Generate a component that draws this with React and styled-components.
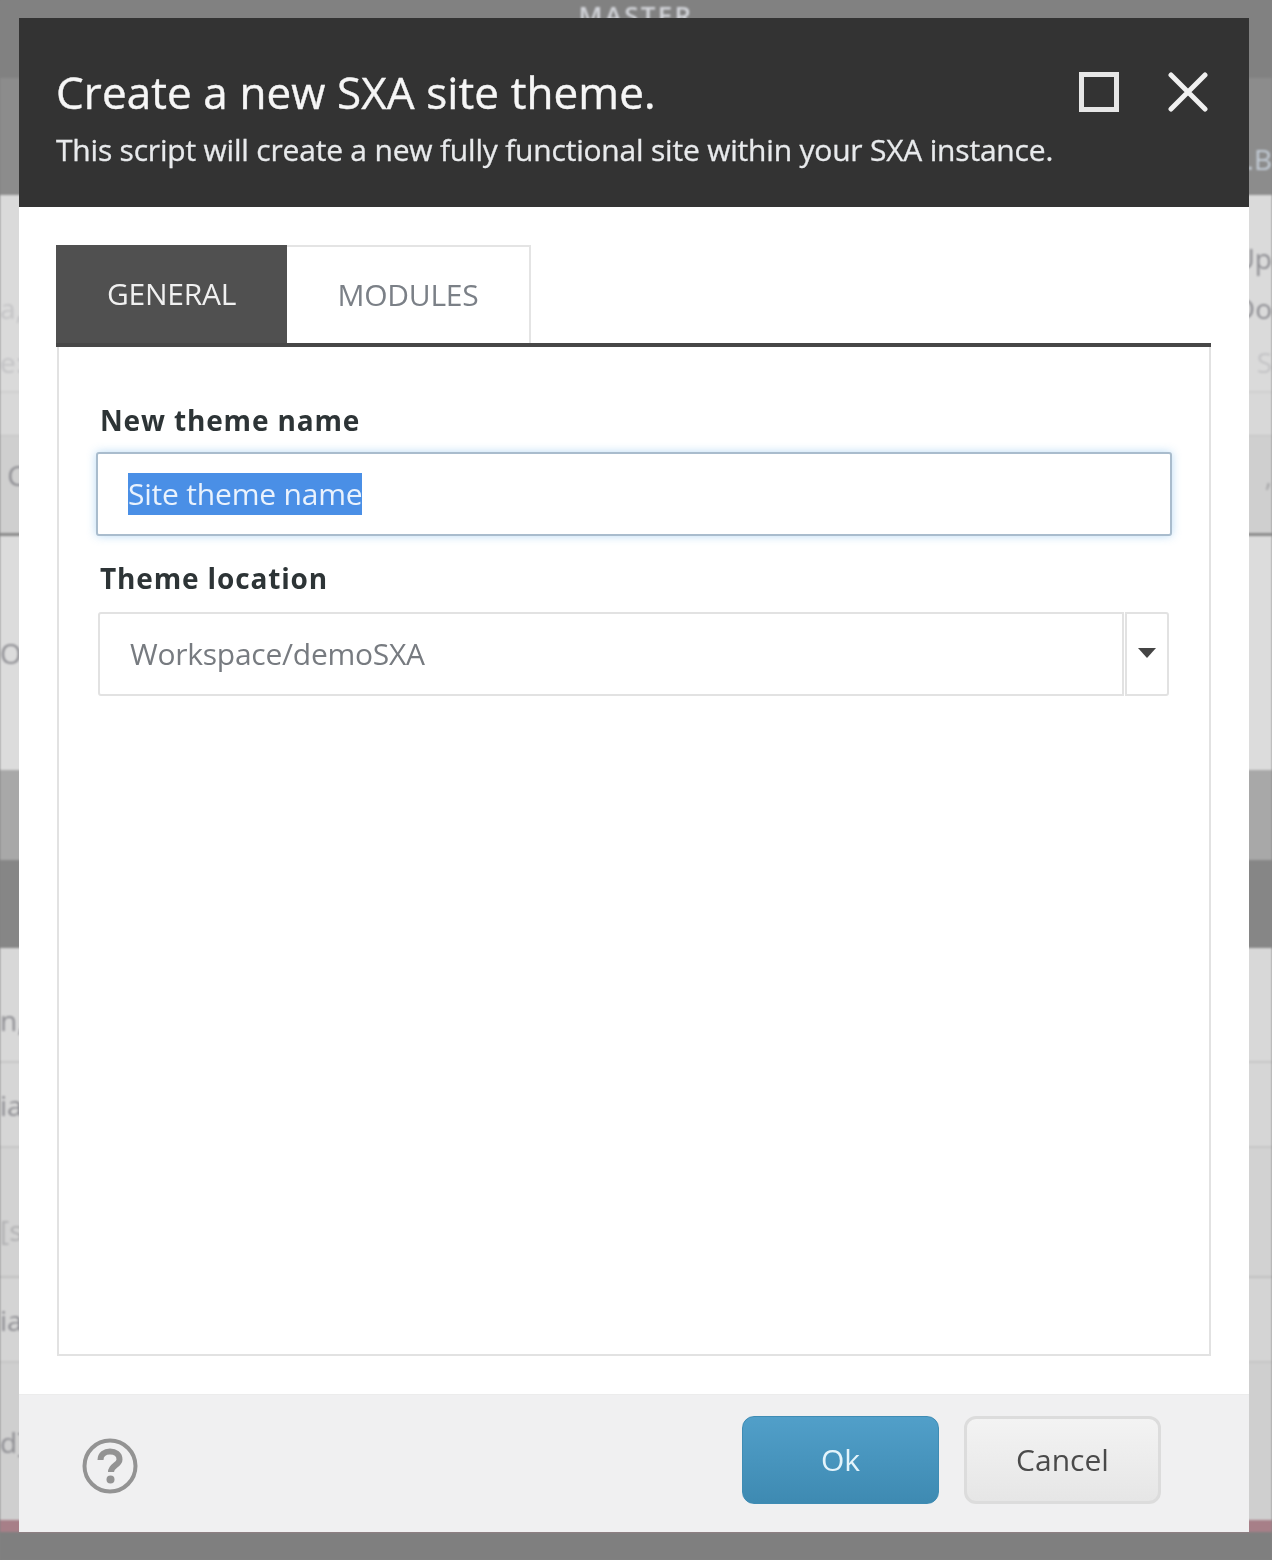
import React from 'react'
import styled, { createGlobalStyle } from 'styled-components'

const Global = createGlobalStyle`
    html, body {
        margin: 0;
        padding: 0;
        background: #808080;
        font-family: "Open Sans", "Liberation Sans", sans-serif;
    }
`

const Page = styled.div`
    position: relative;
    width: 1272px;
    height: 1560px;
    overflow: hidden;
`

const Backdrop = styled.div`
    display: flex;
    flex-direction: column;
    height: 100%;
    filter: blur(1px);
`

const Band = styled.div`
    display: flex;
    align-items: center;
    justify-content: space-between;
    flex: none;
    box-sizing: border-box;
    height: ${p => p.$h}px;
    background: ${p => p.$bg};
    border-bottom: ${p => p.$line || 'none'};
    font-size: 28px;
    color: #8f8f94;
    overflow: hidden;
`

const TopBand = styled(Band)`
    justify-content: center;
    align-items: flex-start;
`

const Master = styled.span`
    margin-top: -3px;
    font-size: 26px;
    font-weight: 600;
    letter-spacing: 2.3px;
    color: #d3d5da;
`

const SideText = styled.span`
    margin-top: ${p => p.$top || 0}px;
    white-space: nowrap;
    color: ${p => p.$color || 'inherit'};
`

const Dialog = styled.div`
    position: absolute;
    left: 19px;
    top: 18px;
    width: 1230px;
    height: 1514px;
    display: flex;
    flex-direction: column;
    background: #fff;
    filter: blur(0.6px);
`

const Header = styled.header`
    display: flex;
    justify-content: space-between;
    box-sizing: border-box;
    height: 189px;
    padding: 49px 41px 0 37px;
    background: #333333;
    color: #fff;
`

const Title = styled.h1`
    margin: 0;
    font-size: 44px;
    line-height: 50px;
    font-weight: 500;
    letter-spacing: 0.1px;
    color: #f6f6f6;
    -webkit-text-stroke: 0.4px #f6f6f6;
`

const Subtitle = styled.p`
    margin: 14px 0 0;
    font-size: 30px;
    line-height: 38px;
    letter-spacing: -0.2px;
    color: #e8eaec;
    -webkit-text-stroke: 0.3px #e8eaec;
`

const WindowIcons = styled.div`
    display: flex;
    gap: 49px;
    margin-top: 5px;
`

const Body = styled.main`
    flex: 1;
    display: flex;
    flex-direction: column;
    padding: 38px 38px 38px 37px;
`

const Tabs = styled.div`
    display: flex;
    border-bottom: 4px solid #474747;
`

const Tab = styled.div`
    display: flex;
    align-items: center;
    justify-content: center;
    box-sizing: border-box;
    width: ${p => p.$w}px;
    height: 98px;
    padding-bottom: 2px;
    font-size: 30px;
    letter-spacing: -0.25px;
    background: ${p => p.$active ? '#505050' : '#fff'};
    color: ${p => p.$active ? '#f0f0f0' : '#7b8087'};
    border: ${p => p.$active ? 'none' : '2px solid #e4e4e4'};
    border-left: none;
    border-bottom: none;
`

const Panel = styled.section`
    flex: 1;
    box-sizing: border-box;
    padding: 55px 39px 0 39px;
    border: 2px solid #e2e2e2;
    border-top: none;
    margin-left: 1px;
`

const Label = styled.label`
    display: block;
    font-size: 28px;
    line-height: 36px;
    font-weight: 700;
    letter-spacing: 0.85px;
    color: #2d3436;
    margin-left: 2px;
`

const TextInput = styled.div`
    display: flex;
    align-items: center;
    box-sizing: border-box;
    height: 84px;
    margin: 14px 0 24px -2px;
    width: 1076px;
    padding-left: 30px;
    border: 2px solid #a9bccd;
    border-radius: 3px;
    box-shadow: 0 0 10px rgba(102, 175, 233, 0.45);
    background: #fff;
    font-size: 30px;
`

const Selected = styled.span`
    display: inline-block;
    line-height: 42px;
    letter-spacing: -0.2px;
    background: #4a8fe6;
    color: #e9f2fd;
    white-space: nowrap;
`

const SelectRow = styled.div`
    display: flex;
    margin-top: 16px;
    width: 1071px;
    height: 84px;
`

const SelectValue = styled.div`
    flex: 1;
    display: flex;
    align-items: center;
    box-sizing: border-box;
    padding: 0 0 2px 30px;
    border: 2px solid #e2e2e2;
    border-radius: 3px 0 0 3px;
    font-size: 30px;
    letter-spacing: -0.25px;
    color: #777b80;
`

const Caret = styled.div`
    display: flex;
    align-items: center;
    justify-content: center;
    box-sizing: border-box;
    width: 44px;
    margin-left: 1px;
    padding-bottom: 3px;
    border: 2px solid #e2e2e2;
    border-radius: 0 3px 3px 0;
`

const Footer = styled.footer`
    display: flex;
    align-items: center;
    box-sizing: border-box;
    height: 138px;
    padding: 0 88px 0 63px;
    background: #f0f0f1;
    border-top: 1px solid #ececec;
`

const HelpIcon = styled.svg`
    margin-top: 4px;
    margin-right: auto;
`

const Button = styled.button`
    box-sizing: border-box;
    width: ${p => p.$w}px;
    height: 88px;
    margin-top: -8px;
    margin-left: ${p => p.$gap || 0}px;
    padding: 0;
    font-family: inherit;
    font-size: 30px;
    border-radius: 12px;
    ${p => p.$primary ? `
        border: 1px solid #3f8cb4;
        background: linear-gradient(#519fc9, #3e8ab2);
        color: #e4f4fb;
    ` : `
        border: 3px solid #dcdcdc;
        background: linear-gradient(#f3f3f3, #e6e6e6);
        color: #4a4a4a;
    `}
`

const App = () => {
    return (
        <Page>
            <Global />
            <Backdrop>
                <TopBand $h={78} $bg="#818181"><Master>MASTER</Master></TopBand>
                <Band $h={117} $bg="#8c8c8c"><span /><SideText $top={44} $color="#c3ccd6">.B</SideText></Band>
                <Band $h={88} $bg="#dadada"><span /><SideText $top={38}>Up</SideText></Band>
                <Band $h={50} $bg="#dadada"><SideText $color="#c4c4c6">a,</SideText><SideText>Do</SideText></Band>
                <Band $h={60} $bg="#dadada" $line="2px solid #cfcfcf"><SideText $color="#c4c4c6">e:</SideText><SideText $color="#c4c4c6">S</SideText></Band>
                <Band $h={43} $bg="#d8d8d8" $line="1px solid #c4c4c4" />
                <Band $h={97} $bg="#cfcfcf"><SideText $top={-20}>&nbsp;C</SideText><SideText $top={-20} $color="#a8a8aa">,</SideText></Band>
                <Band $h={3} $bg="#8a8a8a" />
                <Band $h={234} $bg="#dcdcdc"><SideText>O</SideText></Band>
                <Band $h={90} $bg="#a8a8a8" />
                <Band $h={88} $bg="#868686" />
                <Band $h={115} $bg="#d8d8d8" $line="2px solid #c6c6c6"><SideText $top={30}>n,</SideText></Band>
                <Band $h={85} $bg="#d6d6d6" $line="2px solid #c6c6c6"><SideText>ia</SideText></Band>
                <Band $h={130} $bg="#d2d2d2" $line="2px solid #c0c0c0"><SideText $top={35} $color="#b0b0b2">[s</SideText></Band>
                <Band $h={85} $bg="#d4d4d4" $line="2px solid #c6c6c6"><SideText>ia</SideText></Band>
                <Band $h={157} $bg="#cfcfcf"><SideText>d]</SideText></Band>
                <Band $h={12} $bg="#a77f88" />
                <Band $h={28} $bg="#7f7f7f" />
            </Backdrop>
            <Dialog>
                <Header>
                    <div>
                        <Title>Create a new SXA site theme.</Title>
                        <Subtitle>This script will create a new fully functional site within your SXA instance.</Subtitle>
                    </div>
                    <WindowIcons>
                        <svg width="40" height="40" viewBox="0 0 40 40">
                            <rect x="2.5" y="2.5" width="35" height="35" fill="none" stroke="#e6e6e6" strokeWidth="5" />
                        </svg>
                        <svg width="40" height="40" viewBox="0 0 40 40">
                            <path d="M3 3L37 37M37 3L3 37" fill="none" stroke="#f0f0f0" strokeWidth="5" strokeLinecap="round" />
                        </svg>
                    </WindowIcons>
                </Header>
                <Body>
                    <Tabs>
                        <Tab $w={231} $active>GENERAL</Tab>
                        <Tab $w={244}>MODULES</Tab>
                    </Tabs>
                    <Panel>
                        <Label>New theme name</Label>
                        <TextInput><Selected>Site theme name</Selected></TextInput>
                        <Label>Theme location</Label>
                        <SelectRow>
                            <SelectValue>Workspace/demoSXA</SelectValue>
                            <Caret>
                                <svg width="18" height="10" viewBox="0 0 18 10">
                                    <path d="M0 0H18L9 10Z" fill="#444" />
                                </svg>
                            </Caret>
                        </SelectRow>
                    </Panel>
                </Body>
                <Footer>
                    <HelpIcon width="56" height="56" viewBox="0 0 56 56">
                        <circle cx="28" cy="28" r="25.5" fill="none" stroke="#939393" strokeWidth="4" />
                        <path d="M18.5 22C18.5 16.5 23 13.5 28 13.5C33.5 13.5 37.5 16.5 37.5 21.500C37.500 27 29 27.500 29 34" fill="none" stroke="#939393" strokeWidth="6" />
                        <circle cx="28.500" cy="41.500" r="4" fill="#939393" />
                    </HelpIcon>
                    <Button $primary $w={197}>Ok</Button>
                    <Button $w={197} $gap={25}>Cancel</Button>
                </Footer>
            </Dialog>
        </Page>
    )
}

export default App
